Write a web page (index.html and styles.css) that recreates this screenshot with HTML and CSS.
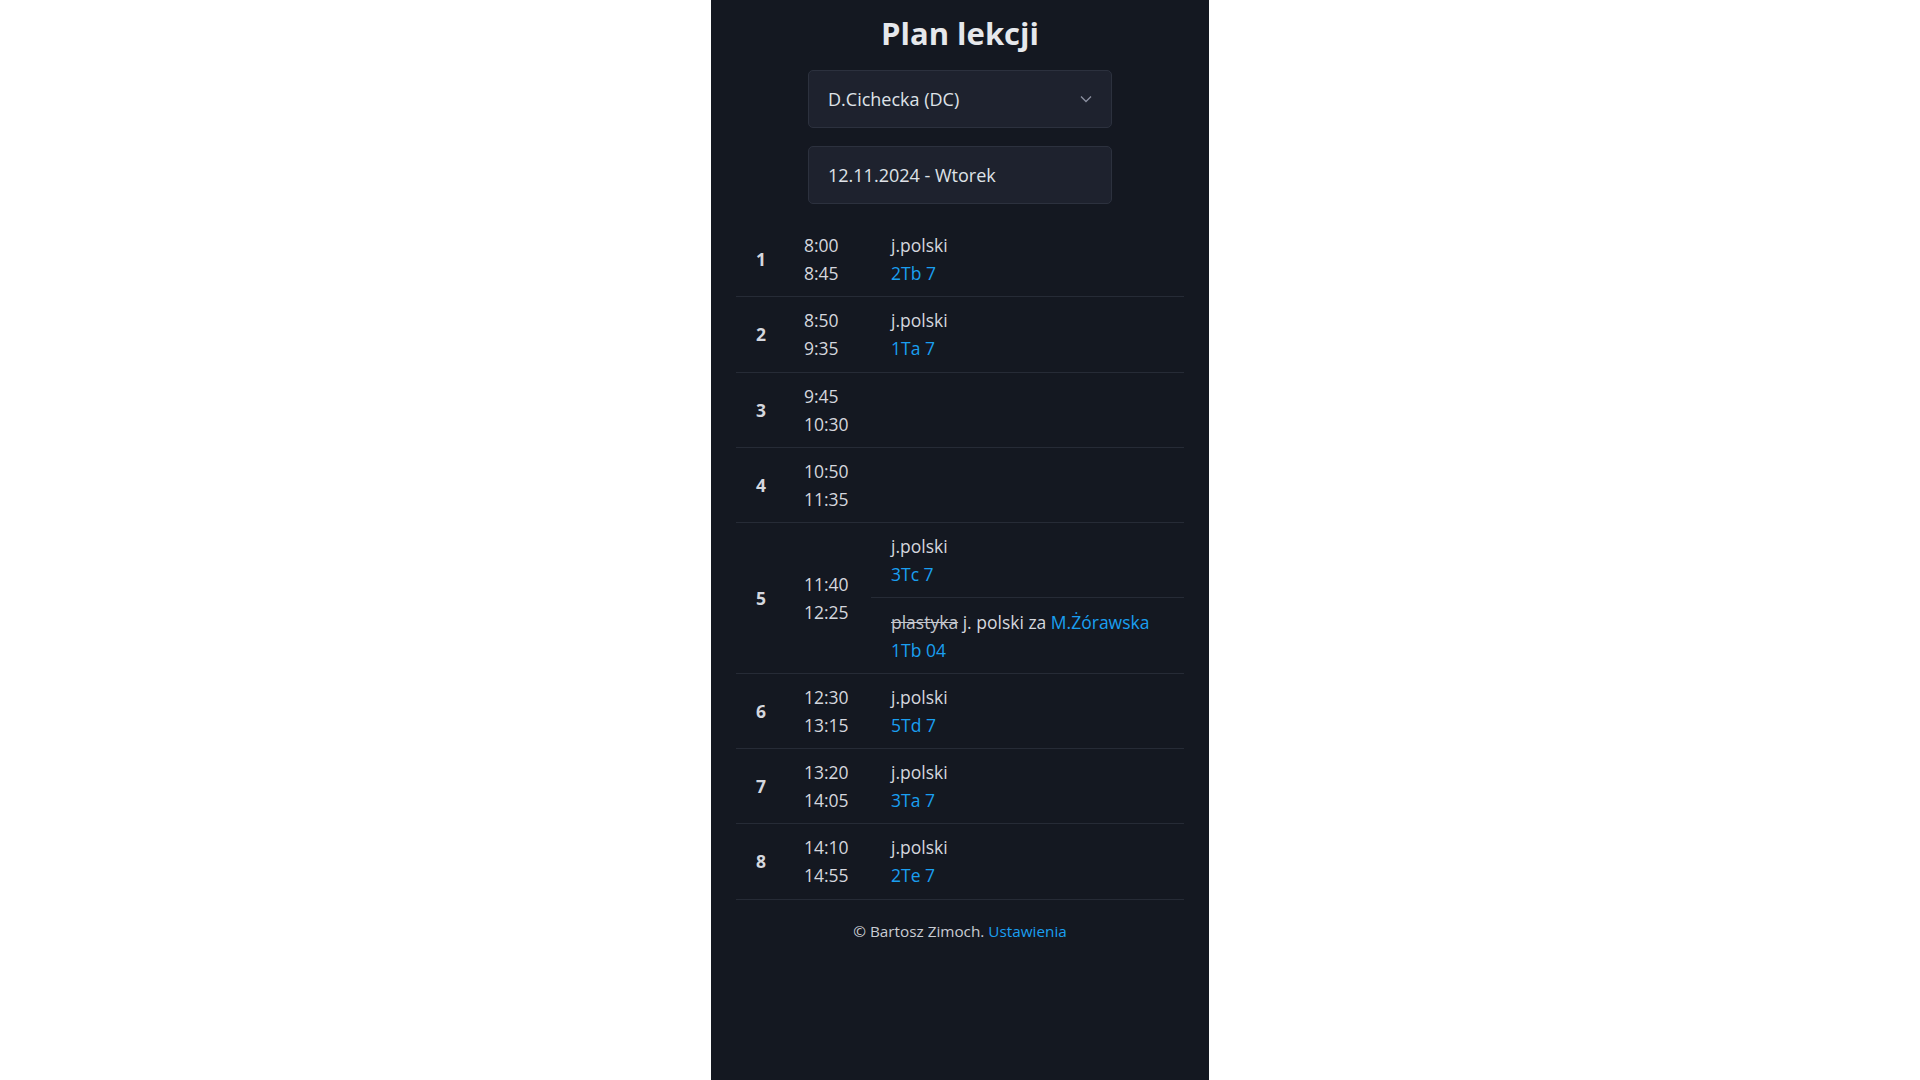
FILE: index.html
```html
<!DOCTYPE html>
<html lang="pl">
<head>
<meta charset="utf-8">
<title>Plan lekcji</title>
<link rel="stylesheet" href="styles.css">
</head>
<body>
<main class="panel">
  <h1 class="title">Plan lekcji</h1>
  <div class="field select">
    <span>D.Cichecka (DC)</span>
    <svg class="chev" width="12" height="8" viewBox="0 0 12 8"><path d="M1 1.5 L6 6.5 L11 1.5" fill="none" stroke="#8b90a0" stroke-width="1.3"/></svg>
  </div>
  <div class="field date"><span>12.11.2024 - Wtorek</span></div>
  <table class="plan">
    <colgroup><col class="c-num"><col class="c-time"><col></colgroup>
    <tbody>
      <tr><td class="num">1</td><td class="time">8:00<br>8:45</td><td class="subj">j.polski<br><a href="#">2Tb 7</a></td></tr>
      <tr><td class="num">2</td><td class="time">8:50<br>9:35</td><td class="subj">j.polski<br><a href="#">1Ta 7</a></td></tr>
      <tr><td class="num">3</td><td class="time">9:45<br>10:30</td><td class="subj"></td></tr>
      <tr><td class="num">4</td><td class="time">10:50<br>11:35</td><td class="subj"></td></tr>
      <tr><td class="num" rowspan="2">5</td><td class="time" rowspan="2">11:40<br>12:25</td><td class="subj">j.polski<br><a href="#">3Tc 7</a></td></tr>
      <tr><td class="subj"><s class="old">plastyka</s> j. polski za <a href="#">M.Żórawska</a><br><a href="#">1Tb 04</a></td></tr>
      <tr><td class="num">6</td><td class="time">12:30<br>13:15</td><td class="subj">j.polski<br><a href="#">5Td 7</a></td></tr>
      <tr><td class="num">7</td><td class="time">13:20<br>14:05</td><td class="subj">j.polski<br><a href="#">3Ta 7</a></td></tr>
      <tr><td class="num">8</td><td class="time">14:10<br>14:55</td><td class="subj">j.polski<br><a href="#">2Te 7</a></td></tr>
    </tbody>
  </table>
  <footer class="foot">© Bartosz Zimoch. <a href="#">Ustawienia</a></footer>
</main>
</body>
</html>
```

FILE: styles.css
```css
html, body {
  margin: 0;
  padding: 0;
  background: #ffffff;
}
body {
  font-family: "Open Sans", "Noto Sans", sans-serif;
  color: #d4d7de;
}
.panel {
  width: 498px;
  min-height: 1080px;
  margin: 0 auto;
  background: #141821;
  box-sizing: border-box;
  padding: 10px 25px 0;
  display: flex;
  flex-direction: column;
  align-items: center;
}
.title {
  margin: 0;
  font-size: 31px;
  line-height: 46px;
  font-weight: 700;
  color: #e6e8ec;
}
.field {
  width: 304px;
  height: 58px;
  box-sizing: border-box;
  background: #1e222e;
  border: 1px solid #2c313e;
  border-radius: 5px;
  padding: 0 19px;
  display: flex;
  align-items: center;
  justify-content: space-between;
  font-size: 18px;
  color: #dfe2e8;
}
.select { margin-top: 14px; }
.date { margin-top: 18px; }
.plan {
  width: 100%;
  margin-top: 18px;
  border-collapse: collapse;
  table-layout: fixed;
  font-size: 17.5px;
  line-height: 28px;
}
.c-num { width: 68px; }
.c-time { width: 67px; }
.plan td {
  padding: 9.15px 0;
  border-bottom: 1px solid #262b36;
  vertical-align: middle;
}
.plan .num {
  padding-left: 20px;
  font-weight: 700;
}
.plan .subj {
  padding-left: 20px;
}
a {
  color: #1a9ff0;
  text-decoration: none;
}
.old {
  color: #c4c7ce;
}
.foot {
  margin-top: 19px;
  font-size: 15.3px;
  line-height: 24px;
  color: #c9ccd3;
}
```
